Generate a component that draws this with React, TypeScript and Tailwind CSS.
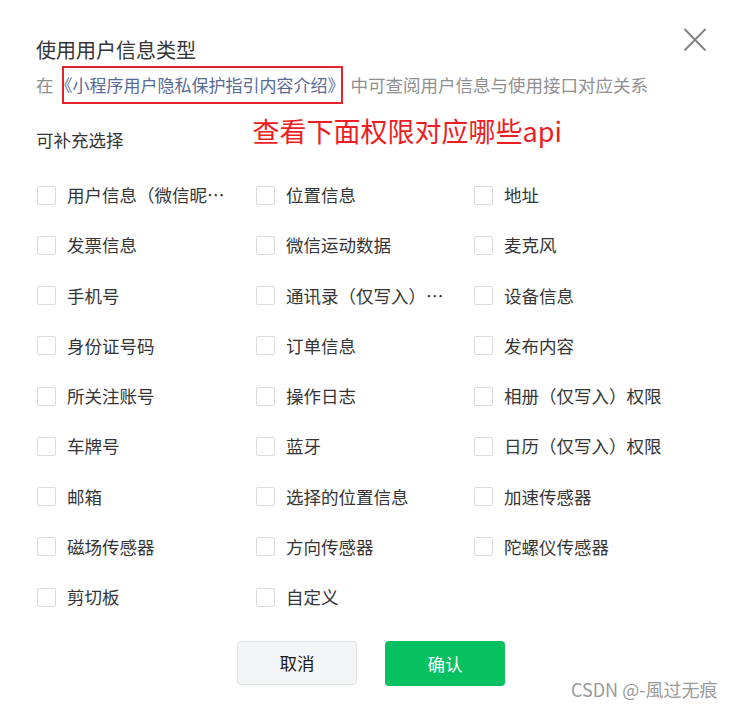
import React from "react";

const items: string[] = [
  "用户信息（微信昵称、头像）",
  "位置信息",
  "地址",
  "发票信息",
  "微信运动数据",
  "麦克风",
  "手机号",
  "通讯录（仅写入）权限",
  "设备信息",
  "身份证号码",
  "订单信息",
  "发布内容",
  "所关注账号",
  "操作日志",
  "相册（仅写入）权限",
  "车牌号",
  "蓝牙",
  "日历（仅写入）权限",
  "邮箱",
  "选择的位置信息",
  "加速传感器",
  "磁场传感器",
  "方向传感器",
  "陀螺仪传感器",
  "剪切板",
  "自定义",
];

export default function App() {
  return (
    <div
      className="relative w-[739px] h-[708px] bg-white overflow-hidden"
      style={{ fontFamily: '"Noto Sans CJK SC", "Noto Sans", sans-serif' }}
    >
      <button className="absolute left-[683px] top-[28px] w-[24px] h-[24px] flex items-center justify-center">
        <svg width="24" height="24" viewBox="0 0 24 24">
          <path d="M1.5 1 L22.5 22.5 M22.5 1 L1.5 22.5" stroke="#808080" strokeWidth="1.8" fill="none" />
        </svg>
      </button>

      <div className="pl-[36px] pt-[36px]">
        <div className="text-[20px] leading-[28px] text-[#353535]">使用用户信息类型</div>

        <div className="mt-[2px] flex items-center h-[38px] text-[17.5px] leading-[24px]">
          <span className="text-[#8f8f8f]">在</span>
          <span className="ml-[8px] h-[38px] w-[281px] border-2 border-[#e3242b] flex items-center overflow-hidden">
            <span className="ml-[-8px] text-[#576b95] whitespace-nowrap text-[17px]">
              《小程序用户隐私保护指引内容介绍》
            </span>
          </span>
          <span className="ml-[8px] text-[#8f8f8f] whitespace-nowrap">中可查阅用户信息与使用接口对应关系</span>
        </div>

        <div className="mt-[9px] flex items-start">
          <span className="mt-[15px] text-[17.5px] leading-[24px] text-[#353535]">可补充选择</span>
          <span className="ml-[129px] text-[27px] leading-[36px] text-[#ee1d24] whitespace-nowrap">
            查看下面权限对应哪些api
          </span>
        </div>

        <div className="mt-[18px] grid grid-cols-[219px_218px_218px] auto-rows-[50.25px]">
          {items.map((t) => (
            <div key={t} className="flex items-center">
              <span className="ml-[1px] w-[19px] h-[19px] shrink-0 border border-[#dcdcdc] rounded-[2px] bg-white" />
              <span className="ml-[11px] max-w-[160px] truncate text-[17.5px] leading-[24px] text-[#353535]">
                {t}
              </span>
            </div>
          ))}
        </div>
      </div>

      <div className="mt-[19px] flex justify-center gap-[28px] pl-[3px]">
        <button className="w-[120px] h-[44px] rounded-[4px] bg-[#f4f5f7] border border-[#e1e2e5] text-[17.5px] text-[#191919]">
          取消
        </button>
        <button className="w-[120px] h-[45px] rounded-[4px] bg-[#07c160] text-[17.5px] text-white">
          确认
        </button>
      </div>

      <div className="absolute left-[571px] top-[677px] text-[18px] leading-[24px] text-[#9a9a9a] whitespace-nowrap">
        CSDN @-風过无痕
      </div>
    </div>
  );
}
